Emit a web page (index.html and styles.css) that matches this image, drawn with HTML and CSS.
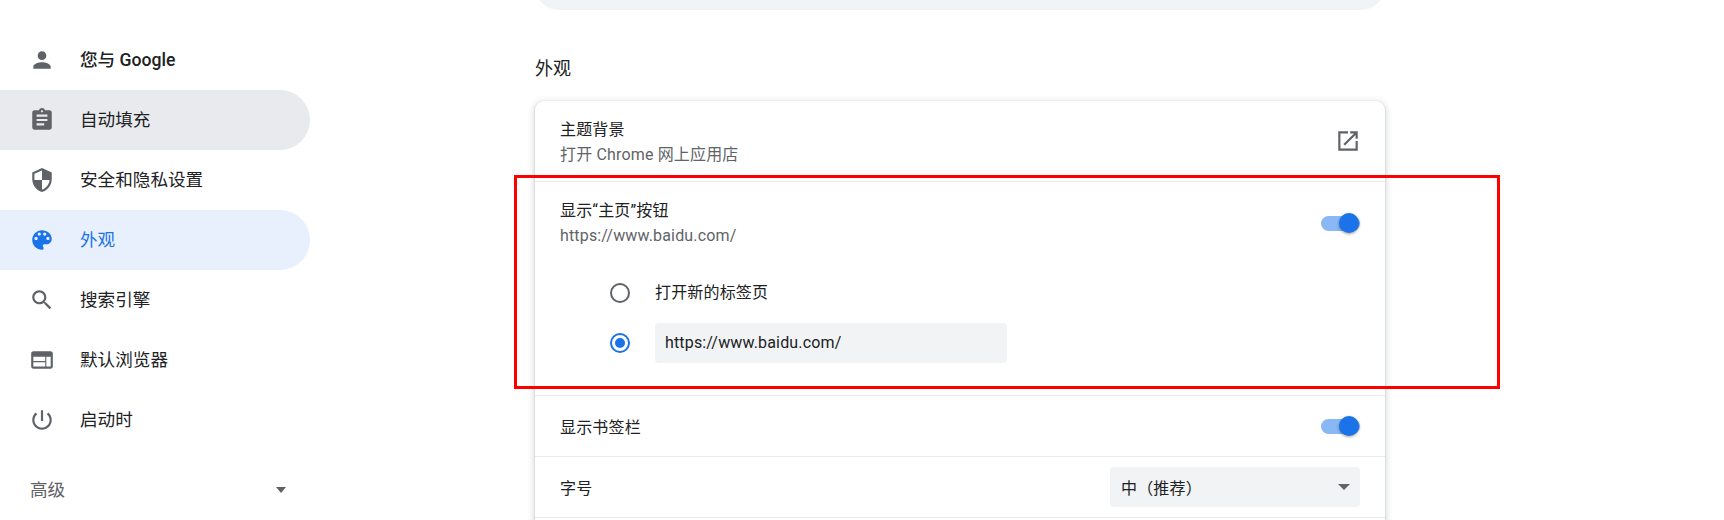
FILE: index.html
```html
<!DOCTYPE html>
<html lang="zh-CN">
<head>
    <meta charset="UTF-8" />
    <title>设置 - 外观</title>
    <link rel="stylesheet" href="styles.css">
</head>
<body>
    <div class="page">
        <!-- SIDEBAR -->
        <nav class="sidebar">
            <a class="nav-item">
                <svg class="icon" viewBox="0 0 24 24"><path d="M12 12c2.21 0 4-1.79 4-4s-1.79-4-4-4-4 1.79-4 4 1.79 4 4 4zm0 2c-2.67 0-8 1.34-8 4v2h16v-2c0-2.66-5.33-4-8-4z"/></svg>
                <span class="nav-label nav-strong">您与 Google</span>
            </a>
            <a class="nav-item hovered">
                <svg class="icon" viewBox="0 0 24 24"><path d="M19 3h-4.18C14.4 1.84 13.3 1 12 1c-1.3 0-2.4.84-2.82 2H5c-1.1 0-2 .9-2 2v14c0 1.1.9 2 2 2h14c1.1 0 2-.9 2-2V5c0-1.1-.9-2-2-2zm-7 0c.55 0 1 .45 1 1s-.45 1-1 1-1-.45-1-1 .45-1 1-1zm2 14H7v-2h7v2zm3-4H7v-2h10v2zm0-4H7V7h10v2z"/></svg>
                <span class="nav-label">自动填充</span>
            </a>
            <a class="nav-item">
                <svg class="icon" viewBox="0 0 24 24"><path d="M12 1L3 5v6c0 5.55 3.84 10.74 9 12 5.16-1.26 9-6.45 9-12V5l-9-4zm0 10.99h7c-.53 4.12-3.28 7.79-7 8.94V12H5V6.3l7-3.11v8.8z"/></svg>
                <span class="nav-label">安全和隐私设置</span>
            </a>
            <a class="nav-item active">
                <svg class="icon" viewBox="0 0 24 24"><path d="M12 3c-4.97 0-9 4.03-9 9s4.03 9 9 9c.83 0 1.5-.67 1.5-1.5 0-.39-.15-.74-.39-1.01-.23-.26-.38-.61-.38-.99 0-.83.67-1.5 1.5-1.5H16c2.76 0 5-2.24 5-5 0-4.42-4.03-8-9-8zm-5.5 9c-.83 0-1.5-.67-1.5-1.5S5.67 9 6.5 9 8 9.67 8 10.5 7.33 12 6.5 12zm3-4C8.67 8 8 7.33 8 6.5S8.67 5 9.5 5s1.5.67 1.5 1.5S10.33 8 9.5 8zm5 0c-.83 0-1.5-.67-1.5-1.5S13.67 5 14.5 5s1.5.67 1.5 1.5S15.33 8 14.5 8zm3 4c-.83 0-1.5-.67-1.5-1.5S16.67 9 17.5 9s1.5.67 1.5 1.5-.67 1.5-1.5 1.5z"/></svg>
                <span class="nav-label">外观</span>
            </a>
            <a class="nav-item">
                <svg class="icon" viewBox="0 0 24 24"><path d="M15.5 14h-.79l-.28-.27C15.41 12.59 16 11.11 16 9.5 16 5.91 13.09 3 9.5 3S3 5.91 3 9.5 5.91 16 9.5 16c1.61 0 3.09-.59 4.23-1.57l.27.28v.79l5 4.99L20.49 19l-4.99-5zm-6 0C7.01 14 5 11.99 5 9.5S7.01 5 9.5 5 14 7.01 14 9.5 11.99 14 9.5 14z"/></svg>
                <span class="nav-label">搜索引擎</span>
            </a>
            <a class="nav-item">
                <svg class="icon" viewBox="0 0 24 24"><path d="M20 4H4c-1.1 0-1.99.9-1.99 2L2 18c0 1.1.9 2 2 2h16c1.1 0 2-.9 2-2V6c0-1.1-.9-2-2-2zm-5 14H4v-4h11v4zm0-5H4V9h11v4zm5 5h-4V9h4v9z"/></svg>
                <span class="nav-label">默认浏览器</span>
            </a>
            <a class="nav-item">
                <svg class="icon" viewBox="0 0 24 24"><path d="M13 3h-2v10h2V3zm4.83 2.17l-1.42 1.42C17.99 7.86 19 9.81 19 12c0 3.87-3.13 7-7 7s-7-3.13-7-7c0-2.19 1.01-4.14 2.58-5.42L6.17 5.17C4.23 6.82 3 9.26 3 12c0 4.97 4.03 9 9 9s9-4.03 9-9c0-2.74-1.23-5.18-3.17-6.83z"/></svg>
                <span class="nav-label">启动时</span>
            </a>
            <div class="nav-advanced">
                <span class="nav-label">高级</span>
                <i class="caret"></i>
            </div>
        </nav>

        <!-- MAIN COLUMN -->
        <main class="content">
            <div class="search-stub"></div>
            <h2 class="section-title">外观</h2>

            <div class="card">
                <div class="row row-theme">
                    <div class="row-text row-text-top">
                        <div class="row-title">主题背景</div>
                        <div class="row-sub">打开 Chrome 网上应用店</div>
                    </div>
                    <svg class="icon-open" viewBox="0 0 24 24"><path d="M19 19H5V5h7V3H3v18h18v-9h-2v7zM14 3v2h3.59l-9.83 9.83 1.41 1.41L19 6.41V10h2V3h-7z"/></svg>
                </div>

                <div class="row-group">
                    <div class="row row-theme">
                        <div class="row-text">
                            <div class="row-title">显示“主页”按钮</div>
                            <div class="row-sub">https://www.baidu.com/</div>
                        </div>
                        <div class="toggle toggle-main"><span class="knob"></span></div>
                    </div>
                    <div class="radio-list">
                        <div class="radio-row">
                            <span class="radio"></span>
                            <span class="radio-label">打开新的标签页</span>
                        </div>
                        <div class="radio-row">
                            <span class="radio checked"></span>
                            <div class="url-field">https://www.baidu.com/</div>
                        </div>
                    </div>
                </div>

                <div class="row row-small">
                    <div class="row-title row-title-small">显示书签栏</div>
                    <div class="toggle"><span class="knob"></span></div>
                </div>

                <div class="row row-small">
                    <div class="row-title row-title-small">字号</div>
                    <div class="select">
                        <span>中（推荐）</span>
                        <i class="caret caret-big"></i>
                    </div>
                </div>
            </div>
        </main>
    </div>

    <!-- annotation drawn over the screenshot -->
    <div class="red-box"></div>
</body>
</html>
```

FILE: styles.css
```css
* {
    margin: 0;
    padding: 0;
    box-sizing: border-box;
}

html, body {
    height: 520px;
    overflow: hidden;
    background: #fff;
}

body {
    position: relative;
    font-family: Roboto, "Noto Sans CJK SC", sans-serif;
    color: #202124;
}

.page {
    display: flex;
    height: 520px;
}

.sidebar {
    flex: 0 0 310px;
    padding-top: 30px;
}

.nav-item {
    display: flex;
    align-items: center;
    gap: 25px;
    height: 60px;
    padding-left: 29px;
    border-radius: 0 30px 30px 0;
    font-size: 17.6px;
}

.nav-label {
    padding-bottom: 4px;
}

.nav-strong {
    font-weight: 500;
}

.icon {
    width: 26px;
    height: 26px;
    fill: #5f6368;
}

.hovered {
    background: #e8eaed;
}

.active {
    background: #e8f0fe;
    color: #1a73e8;
}

.active .icon {
    fill: #1a73e8;
}

.nav-advanced {
    display: flex;
    align-items: center;
    justify-content: space-between;
    height: 60px;
    margin-top: 10px;
    padding: 0 24px 0 30px;
    font-size: 17.6px;
    color: #5f6368;
}

.caret {
    display: block;
    width: 0;
    height: 0;
    border-left: 5.5px solid transparent;
    border-right: 5.5px solid transparent;
    border-top: 6px solid #5f6368;
}

.caret-big {
    border-left-width: 6.5px;
    border-right-width: 6.5px;
    border-top-width: 6.5px;
}

.content {
    width: 850px;
    margin-left: 225px;
}

/* the search box is scrolled mostly out of view */
.search-stub {
    height: 50px;
    margin-top: -40px;
    background: #f1f3f4;
    border-radius: 0 0 24px 24px;
}

.section-title {
    height: 91px;
    padding-top: 44px;
    font-size: 18px;
    line-height: 30px;
    font-weight: 400;
}

.card {
    min-height: 460px;
    background: #fff;
    border-radius: 9px;
    box-shadow: 0 1px 2px rgba(60, 64, 67, 0.3), 0 2px 6px 2px rgba(60, 64, 67, 0.15);
}

.row {
    display: flex;
    align-items: center;
    justify-content: space-between;
    padding: 0 25px;
}

.row-theme {
    height: 80px;
}

.row-small {
    height: 61px;
    border-top: 1px solid #e8eaed;
}

.row-group {
    border-top: 1px solid #e8eaed;
}

.row-small:last-child {
    border-bottom: 1px solid #e8eaed;
    height: 62px;
}

.row-text {
    padding-top: 2px;
}

.row-text-top {
    padding-top: 1px;
}

.row-title {
    font-size: 16px;
    letter-spacing: 0.16px;
    line-height: 25px;
}

.row-title-small {
    padding-top: 2px;
}

.row-sub {
    font-size: 16px;
    letter-spacing: 0.16px;
    line-height: 25px;
    color: #5f6368;
}

.icon-open {
    width: 26px;
    height: 26px;
    margin-right: -1px;
    fill: #5f6368;
}

.toggle {
    display: flex;
    justify-content: flex-end;
    align-items: center;
    width: 39px;
    height: 15px;
    border-radius: 8px;
    background: #8ab8f5;
}

.toggle-main {
    margin-top: 2px;
}

.knob {
    width: 20px;
    height: 20px;
    margin-right: 1px;
    border-radius: 50%;
    background: #1a73e8;
    box-shadow: 0 1px 3px rgba(0, 0, 0, 0.4);
}

.radio-list {
    padding: 6px 25px 27px 75px;
}

.radio-row {
    display: flex;
    align-items: center;
    gap: 25px;
    height: 50px;
}

.radio {
    flex: none;
    position: relative;
    width: 20px;
    height: 20px;
    border: 2px solid #5f6368;
    border-radius: 50%;
}

.radio.checked {
    border-color: #1a73e8;
}

.radio.checked::after {
    content: "";
    position: absolute;
    top: 3px;
    left: 3px;
    width: 10px;
    height: 10px;
    border-radius: 50%;
    background: #1a73e8;
}

.radio-label {
    padding-bottom: 4px;
    font-size: 16px;
    letter-spacing: 0.16px;
}

.url-field {
    width: 352px;
    height: 40px;
    padding-left: 10px;
    border-radius: 4px;
    background: #f1f3f4;
    font-size: 16px;
    letter-spacing: 0.16px;
    line-height: 40px;
}

.select {
    display: flex;
    align-items: center;
    justify-content: space-between;
    width: 250px;
    height: 40px;
    padding: 0 10px 0 11px;
    border-radius: 4px;
    background: #f1f3f4;
    font-size: 16px;
    letter-spacing: 0.16px;
}

.red-box {
    position: absolute;
    left: 514px;
    top: 175px;
    width: 986px;
    height: 214px;
    border: 3px solid #f00;
}
```
